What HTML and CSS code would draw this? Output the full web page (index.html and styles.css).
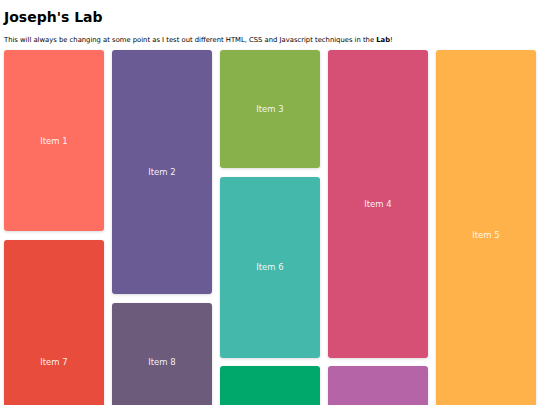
FILE: index.html
```html
<!DOCTYPE html>
<html lang="en">
<head>
<meta charset="utf-8">
<title>Joseph's Lab</title>
<link rel="stylesheet" href="styles.css">
</head>
<body>
<header class="intro">
  <h1 class="title">Joseph's Lab</h1>
  <p class="lead">This will always be changing at some point as I test out different HTML, CSS and Javascript techniques in the <b>Lab</b>!</p>
</header>
<main class="masonry">
  <div class="item span-3 c1">Item 1</div>
  <div class="item span-4 c2">Item 2</div>
  <div class="item span-2 c3">Item 3</div>
  <div class="item span-5 c4">Item 4</div>
  <div class="item span-6 c5">Item 5</div>
  <div class="item span-3 c6">Item 6</div>
  <div class="item span-4 c7">Item 7</div>
  <div class="item span-2 c8">Item 8</div>
  <div class="item span-3 c9">Item 9</div>
  <div class="item span-3 c10">Item 10</div>
</main>
</body>
</html>
```
FILE: styles.css
```css
* { box-sizing: border-box; }
html, body { margin: 0; padding: 0; background: #fff; }
body {
  padding: 9px 4px 4px;
  font-family: "DejaVu Sans", Verdana, sans-serif;
  color: #000;
}
.title {
  margin: 0;
  font-size: 14px;
  line-height: 17px;
  font-weight: bold;
}
.lead {
  margin: 10px 0 0;
  font-size: 6.8px;
  line-height: 9px;
}
.lead b { font-weight: bold; }
.masonry {
  margin-top: 5px;
  display: grid;
  grid-template-columns: repeat(5, 100px);
  grid-auto-rows: 54.5px;
  column-gap: 8px;
  row-gap: 8.8px;
}
.item {
  display: flex;
  align-items: center;
  justify-content: center;
  border-radius: 3px;
  box-shadow: 0 1px 3px rgba(0, 0, 0, 0.15);
  color: rgba(255, 255, 255, 0.92);
  font-size: 8.5px;
}
.span-2 { grid-row: span 2; }
.span-3 { grid-row: span 3; }
.span-4 { grid-row: span 4; }
.span-5 { grid-row: span 5; }
.span-6 { grid-row: span 6; }
.c1 { background: #ff6f61; }
.c2 { background: #6b5b95; }
.c3 { background: #88b04b; }
.c4 { background: #d65076; }
.c5 { background: #ffb14a; }
.c6 { background: #45b8ac; }
.c7 { background: #e74c3c; }
.c8 { background: #6c5b7b; }
.c9 { background: #00a86b; }
.c10 { background: #b565a7; }
```
